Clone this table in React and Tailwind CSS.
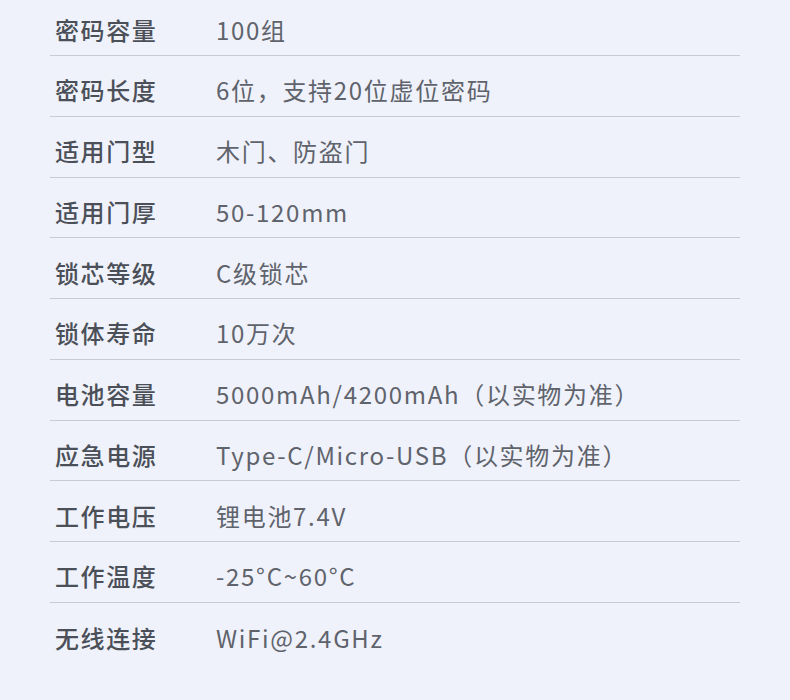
const rows = [
  ["密码容量", "100组"],
  ["密码长度", "6位，支持20位虚位密码"],
  ["适用门型", "木门、防盗门"],
  ["适用门厚", "50-120mm"],
  ["锁芯等级", "C级锁芯"],
  ["锁体寿命", "10万次"],
  ["电池容量", "5000mAh/4200mAh（以实物为准）"],
  ["应急电源", "Type-C/Micro-USB（以实物为准）"],
  ["工作电压", "锂电池7.4V"],
  ["工作温度", "-25°C~60°C"],
  ["无线连接", "WiFi@2.4GHz"],
];

export default function App() {
  return (
    <div
      className="w-[790px] h-[700px] overflow-hidden bg-[#eff2fa]"
      style={{ fontFamily: '"Noto Sans CJK SC", "Noto Sans", sans-serif' }}
    >
      <div className="ml-[50px] w-[690px] -mt-[4.8px]">
        {rows.map(([k, v], i) => (
          <div
            key={k}
            className={
              "flex items-center h-[60.78px] pt-[9px] " +
              (i < rows.length - 1 ? "border-b border-[#c8cbd2]" : "")
            }
          >
            <div className="w-[166px] pl-[5px] text-[24px] leading-[32px] font-medium tracking-[1.6px] text-[#4b4f58]">
              {k}
            </div>
            <div className="text-[24px] leading-[32px] tracking-[1.7px] text-[#5f636c]">
              {v}
            </div>
          </div>
        ))}
      </div>
    </div>
  );
}
